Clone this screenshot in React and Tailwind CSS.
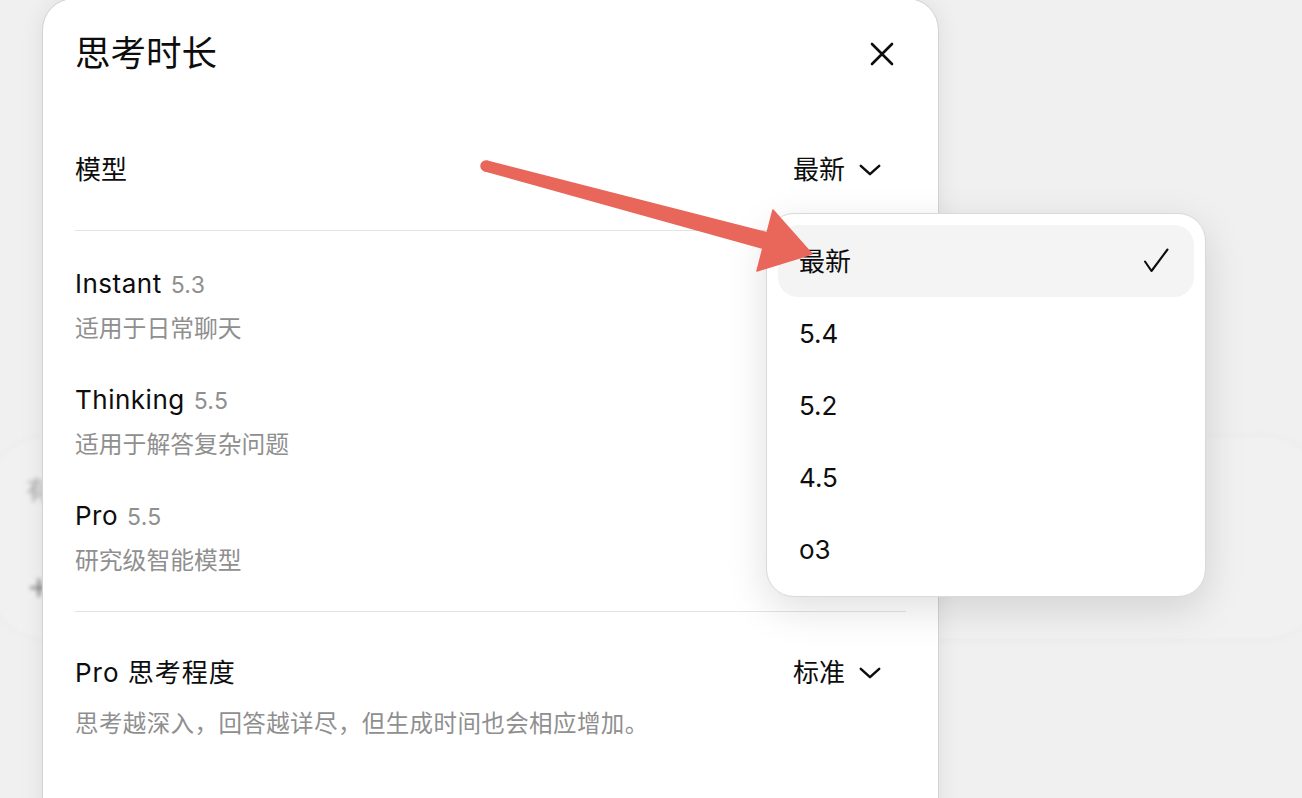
import React from "react";

const models = [
  { name: "Instant", version: "5.3", desc: "适用于日常聊天" },
  { name: "Thinking", version: "5.5", desc: "适用于解答复杂问题" },
  { name: "Pro", version: "5.5", desc: "研究级智能模型" },
];

const versions = ["最新", "5.4", "5.2", "4.5", "o3"];

function CloseIcon() {
  return (
    <svg width="24" height="24" viewBox="0 0 24 24" fill="none" aria-hidden="true">
      <path d="M2 2 L22 22 M22 2 L2 22" stroke="#0d0d0d" strokeWidth="2.6" strokeLinecap="round" />
    </svg>
  );
}

function Chevron() {
  return (
    <svg width="22" height="12" viewBox="0 0 22 12" fill="none" aria-hidden="true">
      <path d="M1.8 1.8 L11 10.2 L20.2 1.8" stroke="#0d0d0d" strokeWidth="2.5" strokeLinecap="round" strokeLinejoin="round" />
    </svg>
  );
}

function Check() {
  return (
    <svg width="26" height="26" viewBox="0 0 26 26" fill="none" aria-hidden="true">
      <path d="M2 13.5 L8.5 23 L24.5 1.5" stroke="#0d0d0d" strokeWidth="2.1" strokeLinecap="round" strokeLinejoin="round" />
    </svg>
  );
}

function SelectButton({ label }) {
  return (
    <button className="mr-[25px] flex items-center gap-[14px] text-[26px] leading-[36px] text-[#0d0d0d]">
      {label}
      <Chevron />
    </button>
  );
}

function Arrow() {
  return (
    <svg
      className="pointer-events-none absolute inset-0 h-full w-full"
      viewBox="0 0 1302 798"
      aria-hidden="true"
    >
      <g fill="#e9665a" stroke="#e9665a" strokeWidth="1.5" strokeLinejoin="round">
        <polygon points="487.3,161.2 767.1,232.8 773,210 812,254 757,271 762.9,248.2 484.7,170.8" />
        <circle cx="486" cy="166" r="5" />
      </g>
    </svg>
  );
}

export default function App() {
  return (
    <div className="relative h-[798px] w-full overflow-hidden bg-[#f0f0f0] font-[Inter,'Noto_Sans_CJK_SC',sans-serif] text-[#0d0d0d]">
      {/* composer behind the dialog, blurred */}
      <div className="absolute left-[-14px] top-[435px] flex h-[206px] w-[1340px] flex-col justify-between rounded-[64px] border border-[#e3e3e3] bg-[#f1f1f1] py-[38px] pl-[39px] blur-[2px]">
        <span className="text-[26px] leading-[34px] text-[#a8a8a8]">有</span>
        <span className="text-[40px] font-light leading-[34px] text-[#777]">+</span>
      </div>

      {/* dialog */}
      <div className="absolute left-[42px] top-[-2px] h-[820px] w-[897px] rounded-t-[32px] border border-[#d2d2d2] bg-white shadow-[0_0_24px_rgba(0,0,0,0.08)]">
        <div className="flex flex-col pl-8 pr-[32px] pt-[33px]">
          <div className="flex items-center justify-between">
            <h2 className="text-[35.5px] font-normal leading-[44px]">思考时长</h2>
            <button className="mr-[12px]">
              <CloseIcon />
            </button>
          </div>

          <div className="mt-[76px] flex h-[36px] items-center justify-between">
            <span className="text-[26px] leading-[36px]">模型</span>
            <SelectButton label="最新" />
          </div>

          <div className="mt-[42px] h-px bg-[#e3e3e3]" />

          <div className="mt-[36px] flex flex-col gap-[38px]">
            {models.map((m) => (
              <div key={m.name} className="flex flex-col">
                <div className="flex items-baseline gap-[9px] leading-[34px]">
                  <span className="text-[26px] tracking-[0.5px]">{m.name}</span>
                  <span className="text-[23px] tracking-[0.3px] text-[#8f8f8f]">{m.version}</span>
                </div>
                <p className="mt-[11px] text-[23.8px] leading-[32px] text-[#8f8f8f]">{m.desc}</p>
              </div>
            ))}
          </div>

          <div className="mt-[34px] h-px bg-[#e3e3e3]" />

          <div className="mt-[44px] flex h-[34px] items-center justify-between">
            <span className="text-[26px] leading-[34px] tracking-[1px]">Pro 思考程度</span>
            <SelectButton label="标准" />
          </div>
          <p className="mt-[18px] text-[23.5px] leading-[32px] tracking-[0.4px] text-[#8f8f8f]">
            思考越深入，回答越详尽，但生成时间也会相应增加。
          </p>
        </div>
      </div>

      {/* version menu */}
      <div
        className="absolute left-[766px] top-[213px] flex w-[440px] flex-col rounded-[28px] border border-[#d9d9d9] bg-white p-[11px] shadow-[0_12px_40px_rgba(0,0,0,0.13)]"
        role="menu"
      >
        {versions.map((v, i) => (
          <div
            key={v}
            role="menuitem"
            className={`flex h-[72px] items-center justify-between rounded-[20px] pl-[21px] pr-[25px] text-[26px] ${
              i === 0 ? "bg-[#f4f4f4]" : ""
            }`}
          >
            <span>{v}</span>
            {i === 0 && <Check />}
          </div>
        ))}
      </div>

      <Arrow />
    </div>
  );
}
